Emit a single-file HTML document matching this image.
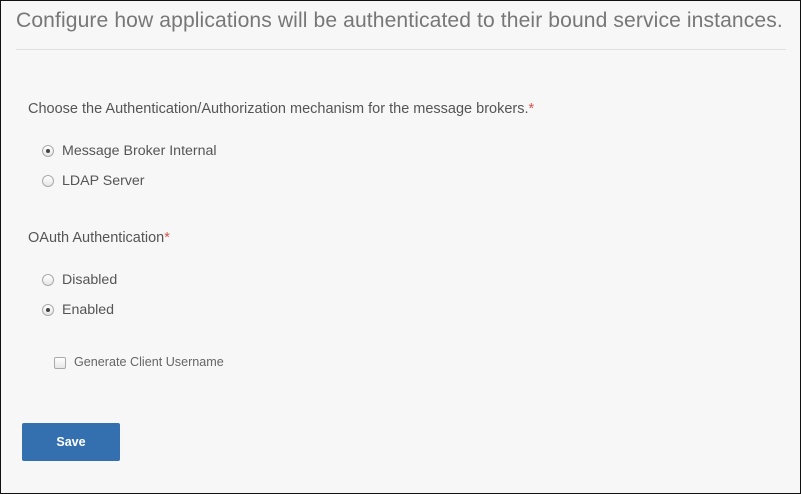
<!DOCTYPE html>
<html><head><style>
body{margin:0;width:801px;height:494px;overflow:hidden;font-family:"Liberation Sans",sans-serif;}
.f{position:absolute;left:0;top:0;width:799px;height:492px;border:1px solid #111;background:#f7f7f7;}
.a{position:absolute;white-space:nowrap;color:#555;}
.h{left:15px;top:8px;font-size:21.1px;color:#777;letter-spacing:0.1px;}
.hr{position:absolute;left:15px;top:48px;width:770px;height:1px;background:#e0e0e0;}
.l{font-size:14.5px;}
.r{position:absolute;width:10px;height:10px;border:1px solid #aaa;border-radius:50%;background:linear-gradient(#fff,#e6e6e6);}
.r.on::after{content:"";position:absolute;left:3px;top:3px;width:4px;height:4px;border-radius:50%;background:#444;}
.req{color:#d9534f;}
.btn{position:absolute;left:21px;top:422px;width:98px;height:38px;background:#3470b0;border-radius:2px;color:#fff;font-weight:bold;font-size:12.5px;text-align:center;line-height:38px;}
.cb{position:absolute;left:53px;top:356px;width:10px;height:10px;border:1px solid #aaa;border-radius:2px;background:linear-gradient(#fff,#e6e6e6);}
</style></head><body><div class="f">
<div class="a h">Configure how applications will be authenticated to their bound service instances.</div>
<div class="hr"></div>
<div class="a l" style="left:27px;top:100px">Choose the Authentication/Authorization mechanism for the message brokers.<span class="req">*</span></div>
<div class="r on" style="left:41px;top:144px"></div><div class="a l" style="left:61px;top:142px;font-size:14.2px">Message Broker Internal</div>
<div class="r" style="left:41px;top:174px"></div><div class="a l" style="left:61px;top:172px;font-size:14.2px">LDAP Server</div>
<div class="a l" style="left:27px;top:229px">OAuth Authentication<span class="req">*</span></div>
<div class="r" style="left:41px;top:273px"></div><div class="a l" style="left:61px;top:271px;font-size:14.2px">Disabled</div>
<div class="r on" style="left:41px;top:303px"></div><div class="a l" style="left:61px;top:301px;font-size:14.2px">Enabled</div>
<div class="cb"></div><div class="a" style="left:73px;top:354px;font-size:12.6px;color:#666">Generate Client Username</div>
<div class="btn">Save</div>
</div></body></html>
